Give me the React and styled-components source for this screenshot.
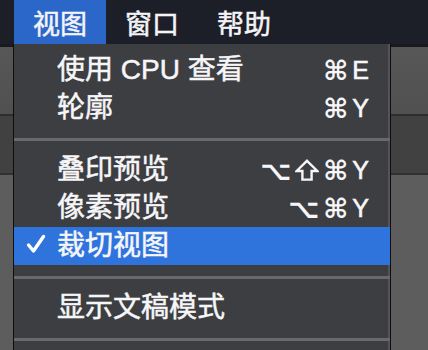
import React from 'react';
import styled, { createGlobalStyle } from 'styled-components';

const GlobalStyle = createGlobalStyle`
  html, body {
    margin: 0;
    padding: 0;
    background: #5c5c5c;
  }
  body {
    font-family: "Liberation Sans", "Noto Sans CJK SC", "DejaVu Sans", sans-serif;
    -webkit-font-smoothing: antialiased;
  }
`;

const Screen = styled.div`
  position: relative;
  width: 428px;
  height: 350px;
  overflow: hidden;
  display: flex;
  flex-direction: column;
  background: #5c5c5c;
`;

const MenuBar = styled.div`
  display: flex;
  height: 44px;
  padding-left: 14px;
  background: #1c1e28;
  flex-shrink: 0;
`;

const BarItem = styled.div`
  display: flex;
  align-items: center;
  padding: 0 19px;
  font-family: "Noto Sans CJK SC", sans-serif;
  font-size: 27px;
  color: #f4f4f6;
  -webkit-text-stroke: 0.5px #f4f4f6;
  background: ${(p) => (p.$active ? '#2b67c9' : 'transparent')};
`;

const Band = styled.div`
  height: ${(p) => p.$h}px;
  flex-shrink: 0;
  background: ${(p) => p.$bg};
`;

const Dropdown = styled.div`
  position: absolute;
  top: 44px;
  left: 13px;
  width: 376px;
  padding-top: 7px;
  padding-bottom: 20px;
  background: #3d3e41;
  border-left: 1px solid #0e0e10;
  border-right: 1px solid #0e0e10;
  box-shadow: inset -2px 0 0 #545457;
`;

const Row = styled.div`
  display: grid;
  grid-template-columns: 31px 1fr auto;
  align-items: center;
  height: 38px;
  padding: 0 21px 0 12px;
  background: ${(p) => (p.$selected ? '#2f74dd' : 'transparent')};
  color: #f6f6f8;
`;

const Label = styled.span`
  font-family: "Liberation Sans", "Noto Sans CJK SC", sans-serif;
  font-size: 28px;
  line-height: 1;
  white-space: nowrap;
  -webkit-text-stroke: 0.5px #f6f6f8;
`;

const Shortcut = styled.span`
  display: flex;
  align-items: center;
  gap: 4px;
  line-height: 1;
  white-space: nowrap;
`;

const Key = styled.span`
  flex-shrink: 0;
  font-family: ${(p) => (p.$letter ? '"Liberation Sans"' : '"DejaVu Sans"')}, sans-serif;
  font-size: ${(p) => (p.$letter ? 25 : 27)}px;
  font-weight: ${(p) => (p.$letter ? 400 : 700)};
  -webkit-text-stroke: ${(p) => (p.$letter ? '0.6px #f6f6f8' : '0')};
`;

const ShiftIcon = styled.svg`
  display: block;
  flex-shrink: 0;
  width: 24px;
  height: 22px;
`;

const Separator = styled.div`
  height: 3px;
  margin: 11px 0 10px;
  background: #69696c;
`;

const Check = () => (
  <svg width="20" height="20" viewBox="0 0 20 20">
    <polyline
      points="2.5,11 7.5,17 17.5,2.5"
      fill="none"
      stroke="#ffffff"
      strokeWidth="3.4"
      strokeLinecap="round"
      strokeLinejoin="round"
    />
  </svg>
);

const Shift = () => (
  <ShiftIcon viewBox="0 0 24 22">
    <path
      d="M12 1.8 L22.4 12 H16.6 V20.6 H7.4 V12 H1.6 Z"
      fill="none"
      stroke="#f6f6f8"
      strokeWidth="2.4"
      strokeLinejoin="miter"
    />
  </ShiftIcon>
);

const groups = [
  [
    { label: '使用 CPU 查看', keys: '⌘E' },
    { label: '轮廓', keys: '⌘Y' },
  ],
  [
    { label: '叠印预览', keys: '⌥⇧⌘Y' },
    { label: '像素预览', keys: '⌥⌘Y' },
    { label: '裁切视图', selected: true },
  ],
  [{ label: '显示文稿模式' }],
];

export default function App() {
  return (
    <>
      <GlobalStyle />
      <Screen>
        <MenuBar>
          <BarItem $active>视图</BarItem>
          <BarItem>窗口</BarItem>
          <BarItem>帮助</BarItem>
        </MenuBar>
        <Band $h={3} $bg="#1a1a1c" />
        <Band $h={67} $bg="linear-gradient(#575757, #505050)" />
        <Band $h={2} $bg="#2e2e2e" />
        <Band $h={57} $bg="#414141" />
        <Band $h={2} $bg="#313131" />
        <Band $h={175} $bg="#5d5d5d" />

        <Dropdown>
          {groups.map((items, gi) => (
            <React.Fragment key={gi}>
              {gi > 0 && <Separator />}
              {items.map((it) => (
                <Row key={it.label} $selected={it.selected}>
                  <span>{it.selected && <Check />}</span>
                  <Label>{it.label}</Label>
                  <Shortcut>
                    {(it.keys || '').split('').map((k, i) =>
                      k === '⇧' ? (
                        <Shift key={i} />
                      ) : (
                        <Key key={i} $letter={/[A-Z]/.test(k)}>
                          {k}
                        </Key>
                      )
                    )}
                  </Shortcut>
                </Row>
              ))}
            </React.Fragment>
          ))}
          <Separator />
        </Dropdown>
      </Screen>
    </>
  );
}
